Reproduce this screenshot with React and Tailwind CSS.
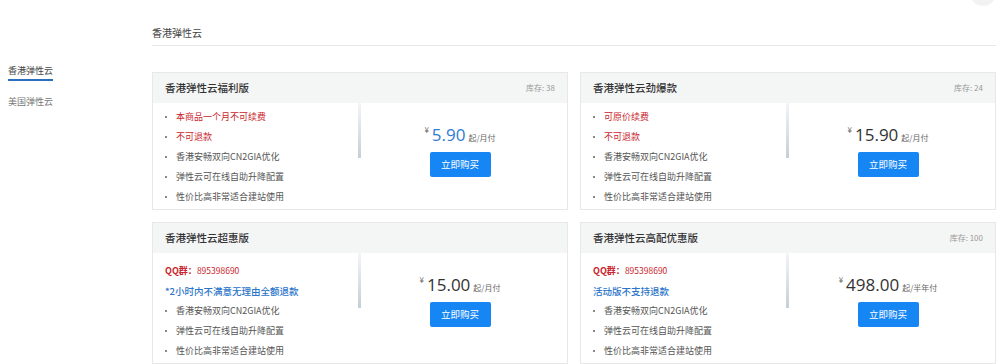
import React from 'react';

const products = [
  {
    title: '香港弹性云福利版',
    stock: '库存: 38',
    price: '5.90',
    unit: '起/月付',
    blue: true,
    notes: [
      { text: '本商品一个月不可续费', red: true },
      { text: '不可退款', red: true },
      { text: '香港安畅双向CN2GIA优化' },
      { text: '弹性云可在线自助升降配置' },
      { text: '性价比高非常适合建站使用' }
    ]
  },
  {
    title: '香港弹性云劲爆款',
    stock: '库存: 24',
    price: '15.90',
    unit: '起/月付',
    notes: [
      { text: '可原价续费', red: true },
      { text: '不可退款', red: true },
      { text: '香港安畅双向CN2GIA优化' },
      { text: '弹性云可在线自助升降配置' },
      { text: '性价比高非常适合建站使用' }
    ]
  },
  {
    title: '香港弹性云超惠版',
    stock: '',
    price: '15.00',
    unit: '起/月付',
    qq: '895398690',
    promo: '*2小时内不满意无理由全额退款',
    notes: [
      { text: '香港安畅双向CN2GIA优化' },
      { text: '弹性云可在线自助升降配置' },
      { text: '性价比高非常适合建站使用' }
    ]
  },
  {
    title: '香港弹性云高配优惠版',
    stock: '库存: 100',
    price: '498.00',
    unit: '起/半年付',
    qq: '895398690',
    promo: '活动版不支持退款',
    notes: [
      { text: '香港安畅双向CN2GIA优化' },
      { text: '弹性云可在线自助升降配置' },
      { text: '性价比高非常适合建站使用' }
    ]
  }
];

const ProductCard = ({ p }) => (
  <div className="border border-[#e8e8e8] bg-white">
    {/* header */}
    <div className="h-[30px] bg-[#f4f5f5] flex items-center justify-between pl-3 pr-3">
      <span className="text-[10.5px] font-medium text-[#333]">{p.title}</span>
      <span className="text-[8px] text-[#999]">{p.stock}</span>
    </div>

    {/* body */}
    <div className="flex">
      <div className="w-[205px] pl-3 pt-1 pb-[2px]">
        {p.qq && (
          <div className="leading-[20px] text-[#c9252c]">
            <span className="text-[9px] font-bold">QQ群：</span>
            <span className="text-[8.5px]">{p.qq}</span>
          </div>
        )}
        {p.promo && (
          <div className="leading-[20px] text-[9.5px] font-medium text-[#2a74c9]">{p.promo}</div>
        )}
        {p.notes.map((n, i) => (
          <div key={i} className="flex items-center leading-[20px]">
            <span className="w-[11px] flex-none">
              <span className="block w-[2px] h-[2px] bg-[#888]"></span>
            </span>
            <span className={`text-[9px] ${n.red ? 'text-[#c9252c]' : 'text-[#555]'}`}>{n.text}</span>
          </div>
        ))}
      </div>

      <div className="w-[3px] h-[55px] flex-none bg-gradient-to-b from-[#f3f5f7] to-[#c6ced6]"></div>

      <div className="flex-1 flex flex-col items-center pt-[22px] pr-2">
        <div className="flex items-end">
          <span className="text-[8px] text-[#666] self-start leading-[10px] mr-[3px]">¥</span>
          <span
            className={`text-[17px] leading-[20px] ${p.blue ? 'text-[#2f7bd2]' : 'text-[#333]'}`}
            style={{ fontFamily: '"Open Sans", "Noto Sans", sans-serif' }}
          >
            {p.price}
          </span>
          <span className="text-[8px] text-[#666] ml-[3px] leading-[14px]">{p.unit}</span>
        </div>
        <button className="mt-[7px] w-[61px] h-[25px] bg-[#1786f5] text-white text-[9.5px] rounded-[2px]">
          立即购买
        </button>
      </div>
    </div>
  </div>
);

const App = () => {
  return (
    <div
      className="relative w-[1000px] h-[364px] bg-white overflow-hidden"
      style={{ fontFamily: '"Noto Sans CJK SC", "Noto Sans", sans-serif' }}
    >
      <div className="absolute -top-[20px] right-[4px] w-[26px] h-[26px] rounded-full bg-[#f2f2f2]"></div>

      <div className="flex">
        {/* sidebar */}
        <div className="w-[152px] flex-none pl-2 pt-[55px]">
          <div className="inline-block text-[9px] text-[#444] leading-[14px] pb-[1px] border-b-2 border-[#2a6fc0]">
            香港弹性云
          </div>
          <div className="text-[9px] text-[#777] leading-[14px] mt-[14px]">美国弹性云</div>
        </div>

        {/* main */}
        <div className="flex-1 pr-1">
          <div className="pt-[26px] pb-[5px] leading-[14px] text-[10px] text-[#444] border-b border-[#e8e8e8]">
            香港弹性云
          </div>
          <div className="grid grid-cols-2 gap-3 mt-[26px]">
            {products.map((p, i) => (
              <ProductCard key={i} p={p} />
            ))}
          </div>
        </div>
      </div>
    </div>
  );
};

export default App;
